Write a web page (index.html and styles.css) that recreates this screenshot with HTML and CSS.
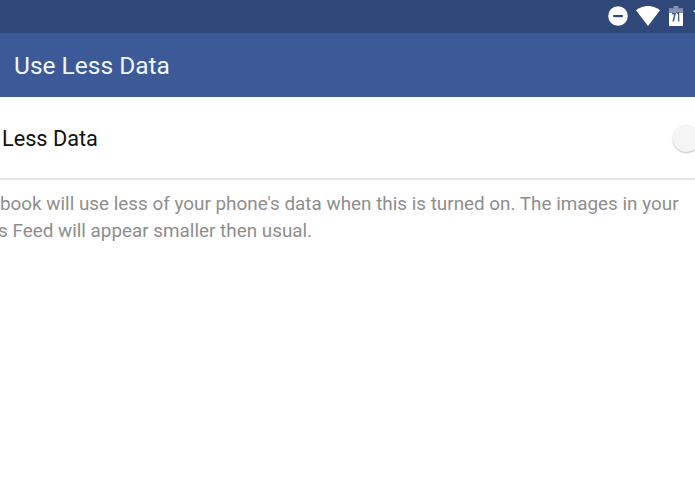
FILE: index.html
```html
<!DOCTYPE html>
<html lang="en">
<head>
    <meta charset="UTF-8">
    <meta name="viewport" content="width=device-width, initial-scale=1.0">
    <title>Use Less Data</title>
    <link rel="stylesheet" href="styles.css">
</head>
<body>
    <div class="status-bar">
        <svg class="icon-dnd" viewBox="0 0 20 20">
            <circle cx="10" cy="10" r="9.8" fill="#fff"/>
            <rect x="5.2" y="9" width="9.6" height="2.2" fill="#30477a"/>
        </svg>
        <svg class="icon-wifi" viewBox="0 0 24 20">
            <path d="M0 4.2 Q12 -4 24 4.2 L12 20 Z" fill="#fff"/>
        </svg>
        <svg class="icon-battery" viewBox="0 0 14 20">
            <path d="M4.5 0h5v2.2H14V8H0V2.2h4.5z" fill="#8592b1"/>
            <path d="M0 7h14v13H0z" fill="#fff"/>
            <path d="M3 7h4L5 15.5H3.4L5 8.6H3zM8.6 6h1.7v9.5H8.9V8H8z" fill="#4d5f8b"/>
        </svg>
        <span class="clock">12:30</span>
    </div>
    <div class="app-bar">
        <h1>Use Less Data</h1>
    </div>
    <div class="setting">
        <span class="setting-name">Less Data</span>
        <span class="switch"></span>
    </div>
    <p class="description">book will use less of your phone's data when this is turned on. The images in your<br><span class="second-line">s Feed will appear smaller then usual.</span></p>
</body>
</html>
```

FILE: styles.css
```css
body {
    font-family: Roboto, sans-serif;
    background-color: #fff;
    margin: 0;
    overflow: hidden;
}
.status-bar {
    display: flex;
    align-items: center;
    box-sizing: border-box;
    height: 33px;
    padding: 0 0 1px 608px;
    background: #30477a;
    overflow: hidden;
}
.status-bar svg {
    flex: none;
}
.icon-dnd {
    width: 20px;
    height: 20px;
}
.icon-wifi {
    width: 24px;
    height: 20px;
    margin-left: 8px;
}
.icon-battery {
    width: 14px;
    height: 20px;
    margin-left: 9px;
}
.clock {
    margin-left: 9px;
    color: #fff;
    font-size: 19px;
    line-height: 20px;
}
.app-bar {
    display: flex;
    align-items: center;
    box-sizing: border-box;
    height: 64px;
    padding-left: 14px;
    background: #3d5a98;
}
h1 {
    margin: 0;
    color: #f0f5ff;
    font-size: 24.5px;
    font-weight: 400;
    white-space: nowrap;
}
.setting {
    display: flex;
    align-items: center;
    justify-content: space-between;
    box-sizing: border-box;
    height: 83px;
    padding: 2px 0 0 2px;
    border-bottom: 2px solid #e6e6e6;
}
.setting-name {
    color: #111;
    font-size: 21.7px;
}
.switch {
    width: 27px;
    height: 27px;
    margin: 0 -5px 1px 0;
    border-radius: 50%;
    background: #f5f5f5;
    box-shadow: 0 1px 2px rgba(0, 0, 0, 0.25);
}
.description {
    margin: 11px 0 0;
    color: #8e8e8e;
    font-size: 18.86px;
    line-height: 27px;
    white-space: nowrap;
}
.second-line {
    margin-left: -2px;
}
```
